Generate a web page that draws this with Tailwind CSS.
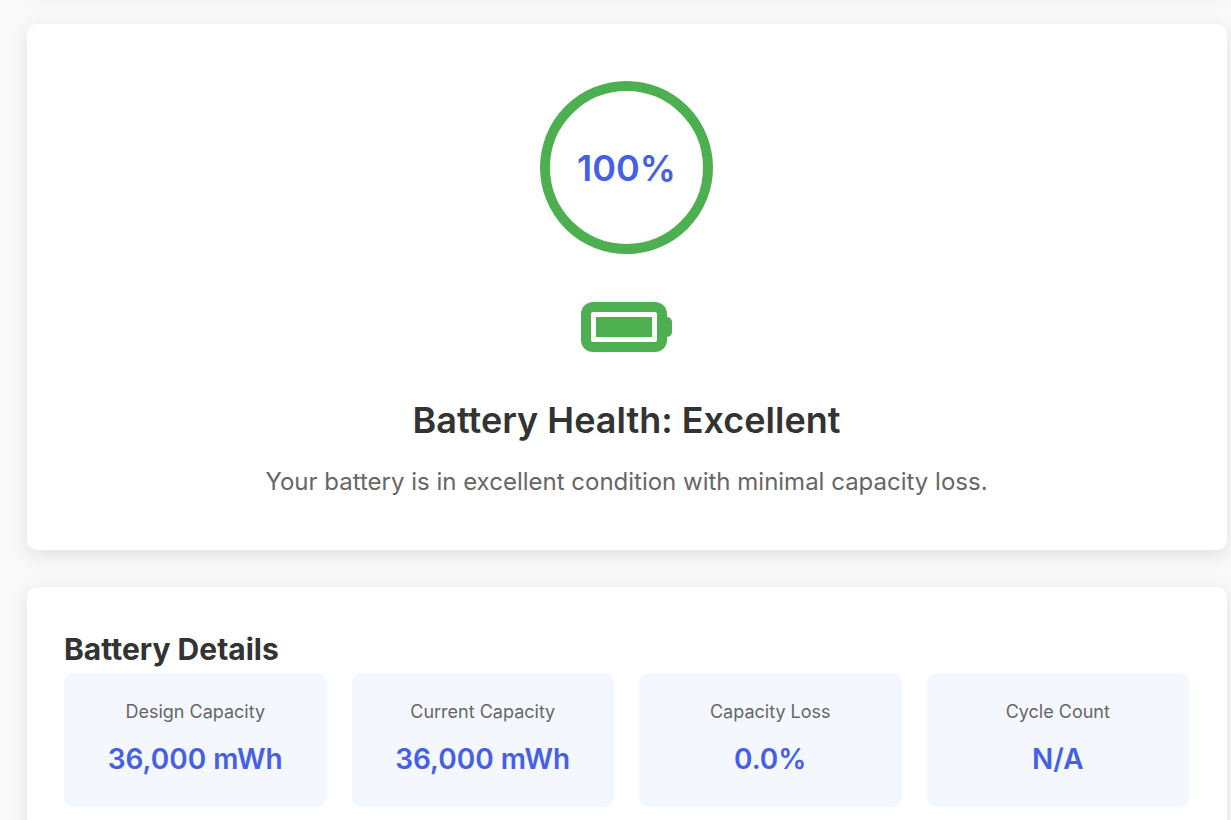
<!DOCTYPE html>
<html lang="en">
<head>
  <meta charset="UTF-8" />
  <meta name="viewport" content="width=device-width, initial-scale=1.0"/>
  <title>Battery Health</title>
  <script src="https://cdn.jsdelivr.net/npm/@tailwindcss/browser@4"></script>
</head>
<body class="bg-[#f9f9f9] font-['Inter',sans-serif] text-[#333] overflow-hidden">
  <main class="pl-[27px] pr-1 flex flex-col gap-[37px]">

    <!-- end of the card scrolled out above -->
    <div class="h-10 -mt-[53px] bg-white rounded-[10px] shadow-[0_5px_19px_rgba(0,0,0,0.1)]"></div>

    <section class="bg-white rounded-[10px] shadow-[0_5px_19px_rgba(0,0,0,0.1)] pt-[57px] pb-12 pl-[37px] pr-[38px] flex flex-col items-center text-center">
      <div class="size-[173px] rounded-full border-[10px] border-[#4caf50] flex items-center justify-center">
        <span class="text-[36px] font-semibold text-[#4560e6]">100%</span>
      </div>
      <svg class="mt-12 w-[91px] h-[50px]" viewBox="0 0 91 50" aria-hidden="true">
        <rect x="0" y="0" width="86" height="50" rx="12" fill="#4caf50"/>
        <rect x="80" y="15" width="11" height="20" rx="5" fill="#4caf50"/>
        <rect x="10" y="10" width="66" height="30" rx="2" fill="#fff"/>
        <rect x="15" y="15" width="56" height="20" fill="#4caf50"/>
      </svg>
      <h2 class="mt-11 text-[36px] leading-[48px] font-semibold">Battery Health: Excellent</h2>
      <p class="mt-[18px] text-2xl leading-[40px] text-[#666]">Your battery is in excellent condition with minimal capacity loss.</p>
    </section>

    <section class="bg-white rounded-[10px] shadow-[0_5px_19px_rgba(0,0,0,0.1)] pt-[38px] pb-9 pl-[37px] pr-[38px]">
      <h3 class="text-[30px] leading-[48px] font-bold">Battery Details</h3>
      <dl class="grid grid-cols-4 gap-[25px] text-center">
        <div class="bg-[#f4f7fe] rounded-[10px] py-6">
          <dt class="text-lg leading-[30px] text-[#666]">Design Capacity</dt>
          <dd class="mt-2 text-[28px] leading-[48px] font-semibold text-[#4560e6]">36,000 mWh</dd>
        </div>
        <div class="bg-[#f4f7fe] rounded-[10px] py-6">
          <dt class="text-lg leading-[30px] text-[#666]">Current Capacity</dt>
          <dd class="mt-2 text-[28px] leading-[48px] font-semibold text-[#4560e6]">36,000 mWh</dd>
        </div>
        <div class="bg-[#f4f7fe] rounded-[10px] py-6">
          <dt class="text-lg leading-[30px] text-[#666]">Capacity Loss</dt>
          <dd class="mt-2 text-[28px] leading-[48px] font-semibold text-[#4560e6]">0.0%</dd>
        </div>
        <div class="bg-[#f4f7fe] rounded-[10px] py-6">
          <dt class="text-lg leading-[30px] text-[#666]">Cycle Count</dt>
          <dd class="mt-2 text-[28px] leading-[48px] font-semibold text-[#4560e6]">N/A</dd>
        </div>
      </dl>
    </section>

  </main>
</body>
</html>
